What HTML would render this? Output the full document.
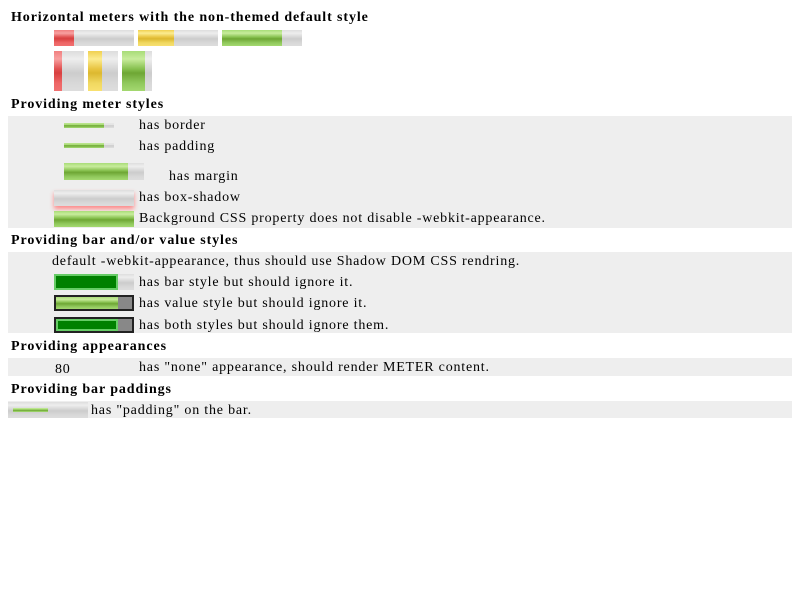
<!DOCTYPE html>
<html><head><style>
body{margin:0;background:#fff;font-family:"Liberation Serif",serif;font-size:14px;letter-spacing:0.8px;color:#000;width:800px;height:600px;position:relative;overflow:hidden}
div{position:absolute}
.h{font-weight:bold;left:11px;font-size:14px;letter-spacing:0.9px}
.band{left:8px;width:784px;background:#eee}
.t{white-space:nowrap;line-height:14px;margin-top:1px}
.g{background:linear-gradient(#ddd,#eee 20%,#d6d6d6 45%,#ccc 55%,#d8d8d8 80%,#ddd)}
.gr{background:linear-gradient(#a8dc78,#c8ec9c 20%,#86c04e 45%,#6ea634 55%,#90c85c 80%,#a4d870)}
.rd{background:linear-gradient(#f08080,#f8a0a0 20%,#e05050 45%,#d84040 55%,#e66 80%,#f07070)}
.yl{background:linear-gradient(#f0d050,#fcec90 20%,#e8c440 45%,#dcb830 55%,#f0d860 80%,#f8e070)}
</style></head><body>
<div class="h t" style="top:10px">Horizontal meters with the non-themed default style</div>
<div class="g" style="left:54px;top:30px;width:80px;height:16px"></div><div class="rd" style="left:54px;top:30px;width:20px;height:16px"></div>
<div class="g" style="left:138px;top:30px;width:80px;height:16px"></div><div class="yl" style="left:138px;top:30px;width:36px;height:16px"></div>
<div class="g" style="left:222px;top:30px;width:80px;height:16px"></div><div class="gr" style="left:222px;top:30px;width:60px;height:16px"></div>
<div class="g" style="left:54px;top:51px;width:30px;height:40px"></div><div class="rd" style="left:54px;top:51px;width:8px;height:40px"></div>
<div class="g" style="left:88px;top:51px;width:30px;height:40px"></div><div class="yl" style="left:88px;top:51px;width:14px;height:40px"></div>
<div class="g" style="left:122px;top:51px;width:30px;height:40px"></div><div class="gr" style="left:122px;top:51px;width:23px;height:40px"></div>

<div class="h t" style="top:97px">Providing meter styles</div>
<div class="band" style="top:116px;height:112px"></div>
<div class="g" style="left:64px;top:123px;width:50px;height:5px"></div><div class="gr" style="left:64px;top:123px;width:40px;height:5px"></div>
<div class="t" style="left:139px;top:118px">has border</div>
<div class="g" style="left:64px;top:143px;width:50px;height:5px"></div><div class="gr" style="left:64px;top:143px;width:40px;height:5px"></div>
<div class="t" style="left:139px;top:139px">has padding</div>
<div class="g" style="left:64px;top:163px;width:80px;height:17px"></div><div class="gr" style="left:64px;top:163px;width:64px;height:17px"></div>
<div class="t" style="left:169px;top:169px">has margin</div>
<div class="g" style="left:54px;top:190px;width:80px;height:16px;box-shadow:0 3px 5px #f88"></div>
<div class="t" style="left:139px;top:190px">has box-shadow</div>
<div class="gr" style="left:54px;top:211px;width:80px;height:16px"></div>
<div class="t" style="left:139px;top:211px">Background CSS property does not disable -webkit-appearance.</div>

<div class="h t" style="top:233px">Providing bar and/or value styles</div>
<div class="band" style="top:252px;height:81px"></div>
<div class="t" style="left:52px;top:254px">default -webkit-appearance, thus should use Shadow DOM CSS rendring.</div>
<div class="g" style="left:54px;top:274px;width:80px;height:16px"></div>
<div style="left:54px;top:274px;width:64px;height:16px;box-sizing:border-box;border:2px solid #6c6;background:#008000"></div>
<div class="t" style="left:139px;top:275px">has bar style but should ignore it.</div>
<div style="left:54px;top:295px;width:80px;height:16px;box-sizing:border-box;border:2px solid #222;background:#888"></div>
<div class="gr" style="left:56px;top:297px;width:62px;height:12px"></div>
<div class="t" style="left:139px;top:296px">has value style but should ignore it.</div>
<div style="left:54px;top:317px;width:80px;height:16px;box-sizing:border-box;border:2px solid #222;background:#888"></div>
<div style="left:56px;top:319px;width:62px;height:12px;box-sizing:border-box;border:2px solid #6c6;background:#008000"></div>
<div class="t" style="left:139px;top:318px">has both styles but should ignore them.</div>

<div class="h t" style="top:339px">Providing appearances</div>
<div class="band" style="top:358px;height:18px"></div>
<div class="t" style="left:55px;top:362px">80</div>
<div class="t" style="left:139px;top:360px">has "none" appearance, should render METER content.</div>

<div class="h t" style="top:382px">Providing bar paddings</div>
<div class="band" style="top:401px;height:17px"></div>
<div class="g" style="left:8px;top:402px;width:80px;height:16px"></div>
<div class="gr" style="left:13px;top:408px;width:35px;height:4px"></div>
<div class="t" style="left:91px;top:403px">has "padding" on the bar.</div>
</body></html>
